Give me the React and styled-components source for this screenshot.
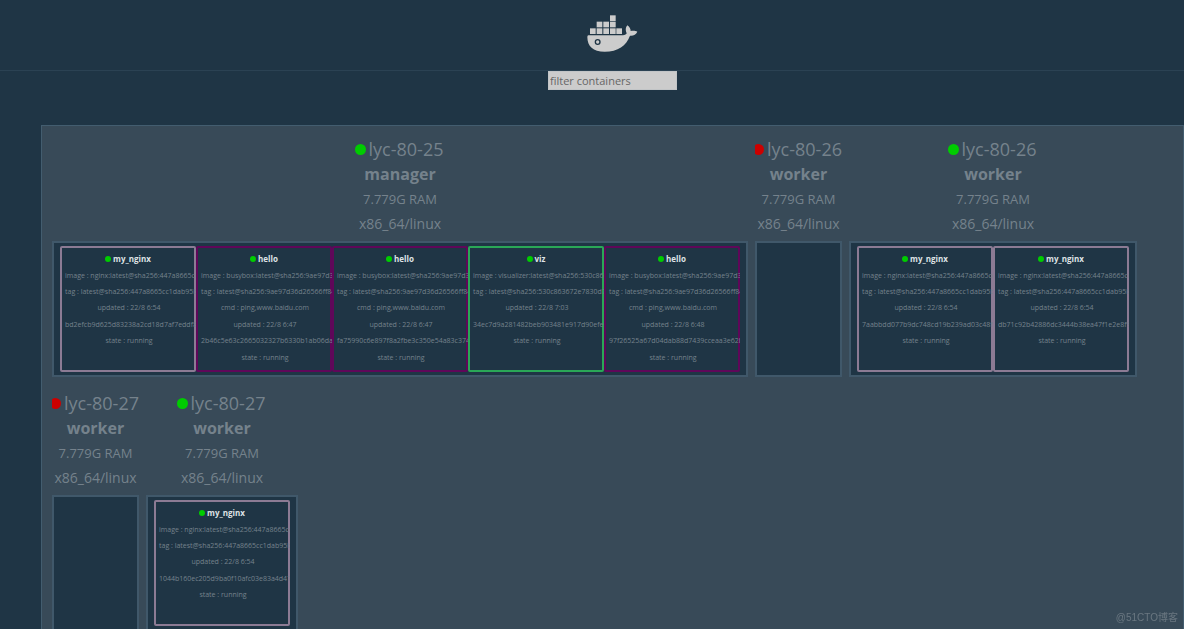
// App.jsx
import React, { useState } from 'react';
import styled, { createGlobalStyle } from 'styled-components';

const NGINX_SHA = '447a8665cc1dab95b1';
const BUSYBOX_SHA = '9ae97d36d26566ff84e';
const VIZ_SHA = '530c863672e7830d75';

const nginx = (updated, id) => ({
  name: 'my_nginx',
  color: '#8c7b94',
  lines: [
    `image : nginx:latest@sha256:${NGINX_SHA}`,
    `tag : latest@sha256:${NGINX_SHA}`,
    `updated : ${updated}`,
    id,
    'state : running',
  ],
});

const hello = (updated, id) => ({
  name: 'hello',
  color: '#5f0759',
  lines: [
    `image : busybox:latest@sha256:${BUSYBOX_SHA}`,
    `tag : latest@sha256:${BUSYBOX_SHA}`,
    'cmd : ping,www.baidu.com',
    `updated : ${updated}`,
    id,
    'state : running',
  ],
});

const viz = (updated, id) => ({
  name: 'viz',
  color: '#2aa757',
  lines: [
    `image : visualizer:latest@sha256:${VIZ_SHA}`,
    `tag : latest@sha256:${VIZ_SHA}`,
    `updated : ${updated}`,
    id,
    'state : running',
  ],
});

const nodes = [
  {
    id: 'n1',
    name: 'lyc-80-25',
    role: 'manager',
    up: true,
    tasks: [
      nginx('22/8 6:54', 'bd2efcb9d625d83238a2cd18d7af7eddf84c'),
      hello('22/8 6:47', '2b46c5e63c2665032327b6330b1ab06da7e4'),
      hello('22/8 6:47', 'fa75990c6e897f8a2fbe3c350e54a83c3745d'),
      viz('22/8 7:03', '34ec7d9a281482beb903481e917d90efef2'),
      hello('22/8 6:48', '97f26525a67d04dab88d7439cceaa3e62b7f'),
    ],
  },
  { id: 'n2', name: 'lyc-80-26', role: 'worker', up: false, tasks: [] },
  {
    id: 'n3',
    name: 'lyc-80-26',
    role: 'worker',
    up: true,
    tasks: [
      nginx('22/8 6:54', '7aabbdd077b9dc748cd19b239ad03c48f95'),
      nginx('22/8 6:54', 'db71c92b42886dc3444b38ea47f1e2e8f97'),
    ],
  },
  { id: 'n4', name: 'lyc-80-27', role: 'worker', up: false, tasks: [] },
  {
    id: 'n5',
    name: 'lyc-80-27',
    role: 'worker',
    up: true,
    tasks: [nginx('22/8 6:54', '1044b160ec205d9ba0f10afc03e83a4d47c9')],
  },
];

const GlobalStyle = createGlobalStyle`
  html {
    scrollbar-width: none;
  }

  body {
    margin: 0;
    background: #1f3545;
    color: #75828c;
    font-family: 'Open Sans', sans-serif;
  }
`;

const Header = styled.header`
  display: flex;
  justify-content: center;
  padding: 15px 0 18px 41px;
  border-bottom: 1px solid #2b4253;
`;

const Logo = styled.svg`
  display: block;
  width: 51px;
  height: 37px;
`;

const FilterBar = styled.div`
  display: flex;
  justify-content: center;
  padding-left: 41px;
`;

const FilterInput = styled.input`
  box-sizing: border-box;
  width: 129px;
  height: 19px;
  padding: 0 1px;
  border: 1px solid #c2c5c7;
  border-radius: 0;
  background: #cccccc;
  color: #333;
  font: 11px 'Open Sans', sans-serif;

  &::placeholder {
    color: #666;
    opacity: 1;
  }
`;

const Cluster = styled.main`
  display: flex;
  flex-wrap: wrap;
  align-items: flex-start;
  gap: 14px 7px;
  margin: 35px 0 0 41px;
  padding: 11px 10px 14px;
  border: 1px solid #435d6f;
  background: #384a58;
`;

const Node = styled.section`
  display: flex;
  flex-direction: column;
`;

/* takes its width from the task box below it */
const NodeHeader = styled.div`
  width: 0;
  min-width: 100%;
  margin-bottom: 5px;
  overflow: hidden;
  text-align: center;
  white-space: nowrap;
`;

const NodeName = styled.h2`
  display: flex;
  align-items: center;
  justify-content: center;
  gap: 3px;
  margin: 0;
  padding-right: 2px;
  font-size: 18px;
  font-weight: 400;
  line-height: 25px;
`;

const Role = styled.div`
  font-size: 16px;
  font-weight: 700;
  line-height: 25px;
`;

const Memory = styled.div`
  font-size: 13px;
  line-height: 25px;
`;

const Platform = styled.div`
  font-size: 14px;
  line-height: 24px;
`;

const Dot = styled.span`
  flex: none;
  width: ${(p) => p.$size}px;
  height: ${(p) => p.$size}px;
  border-radius: 50%;
  background: ${(p) => (p.$up ? '#00cc00' : '#cc0000')};
`;

const TaskBox = styled.div`
  box-sizing: border-box;
  display: flex;
  min-width: 87px;
  min-height: 136px;
  padding: 3px 6px;
  border: 2px solid #40586a;
  background: #1f3545;
`;

/* long hashes run up to the outer edge of the border */
const Task = styled.article`
  box-sizing: border-box;
  display: grid;
  grid-template-rows: repeat(7, 1fr);
  grid-template-columns: 100%;
  align-items: center;
  width: 136px;
  height: 126px;
  padding: 3px 1px 4px 3px;
  border: 2px solid ${(p) => p.$color};
  border-radius: 2px;
  overflow: clip;
  overflow-clip-margin: border-box;
`;

const TaskName = styled.h3`
  display: flex;
  align-items: center;
  justify-content: center;
  gap: 2px;
  margin: 0;
  padding-right: 2px;
  color: #dfe3e6;
  font-size: 8px;
  font-weight: 700;
  line-height: 16px;
`;

const TaskLine = styled.div`
  font-size: 7px;
  line-height: 16px;
  text-align: center;
  white-space: nowrap;
`;

const Watermark = styled.div`
  position: fixed;
  right: 6px;
  bottom: 4px;
  color: #6a7781;
  font: 10px/14px 'Liberation Sans', 'Noto Sans CJK SC', sans-serif;
`;

const boxes = [
  [9, 40], [29, 40], [49, 40], [69, 40], [88, 40],
  [29, 20], [49, 20], [69, 20],
  [69, 1],
];

const DockerLogo = () => (
  <Logo viewBox="0 0 153 111" fill="#cccccc" role="img" aria-label="Docker">
    {boxes.map(([x, y]) => (
      <rect key={`${x}-${y}`} x={x} y={y} width="17" height="17" />
    ))}
    <path d="M4 61H108C114 60 118 58 119 55C115 47 115 37 121 31C128 36 131 42 131 48C138 46 146 47 151 50C147 59 139 63 129 62C118 92 93 110 53 110C18 110 1 94 1 66Q1 61 4 61Z" />
    <circle cx="32" cy="81" r="7" fill="none" stroke="#1f3545" strokeWidth="4" />
  </Logo>
);

const App = () => {
  const [filter, setFilter] = useState('');

  const matches = (task) => task.name.includes(filter.trim());

  return (
    <>
      <GlobalStyle />
      <Header>
        <DockerLogo />
      </Header>
      <FilterBar>
        <FilterInput
          type="text"
          aria-label="filter containers"
          placeholder="filter containers"
          value={filter}
          onChange={(e) => setFilter(e.target.value)}
        />
      </FilterBar>

      <Cluster>
        {nodes.map((node) => (
          <Node key={node.id}>
            <NodeHeader>
              <NodeName>
                <Dot $size={11} $up={node.up} />
                {node.name}
              </NodeName>
              <Role>{node.role}</Role>
              <Memory>7.779G RAM</Memory>
              <Platform>x86_64/linux</Platform>
            </NodeHeader>
            <TaskBox>
              {node.tasks.filter(matches).map((task, i) => (
                <Task key={i} $color={task.color}>
                  <TaskName>
                    <Dot $size={6} $up />
                    {task.name}
                  </TaskName>
                  {task.lines.map((line) => (
                    <TaskLine key={line}>{line}</TaskLine>
                  ))}
                </Task>
              ))}
            </TaskBox>
          </Node>
        ))}
      </Cluster>

      <Watermark>@51CTO博客</Watermark>
    </>
  );
};

export default App;
